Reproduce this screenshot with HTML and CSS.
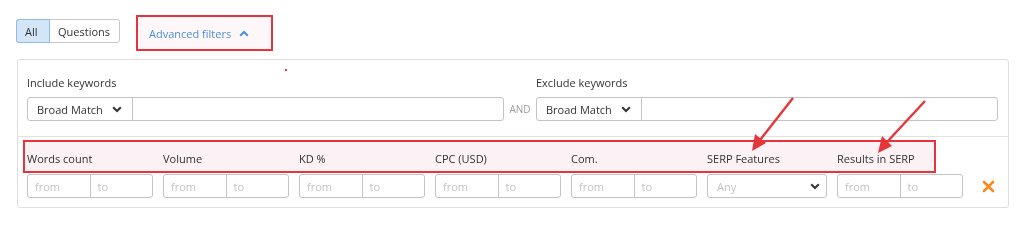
FILE: index.html
```html
<!DOCTYPE html>
<html>
<head>
<meta charset="utf-8">
<link rel="stylesheet" href="styles.css">
</head>
<body>
<div class="top">
  <div class="toggle">
    <span class="tg tg-on">All</span>
    <span class="tg">Questions</span>
  </div>
  <div class="adv">
    <span>Advanced filters</span>
    <svg class="chev-up" width="10" height="7" viewBox="0 0 10 7"><path d="M1.2 5.8 L5 2 L8.8 5.8" fill="none" stroke="#4a8fdc" stroke-width="2"/></svg>
  </div>
</div>
<div class="panel">
  <span class="dot"></span>
  <div class="sec sec1">
    <div class="kw">
      <div class="lbl">Include keywords</div>
      <div class="ig">
        <div class="match">Broad Match <svg width="10" height="7" viewBox="0 0 10 7"><path d="M1.2 1.2 L5 5 L8.8 1.2" fill="none" stroke="#333" stroke-width="2"/></svg></div>
        <div class="txt"></div>
      </div>
    </div>
    <div class="and">AND</div>
    <div class="kw">
      <div class="lbl">Exclude keywords</div>
      <div class="ig">
        <div class="match">Broad Match <svg width="10" height="7" viewBox="0 0 10 7"><path d="M1.2 1.2 L5 5 L8.8 1.2" fill="none" stroke="#333" stroke-width="2"/></svg></div>
        <div class="txt"></div>
      </div>
    </div>
  </div>
  <div class="sec sec2">
    <div class="hl"></div>
    <div class="grid">
      <div class="lbl">Words count</div>
      <div class="lbl">Volume</div>
      <div class="lbl">KD %</div>
      <div class="lbl">CPC (USD)</div>
      <div class="lbl">Com.</div>
      <div class="lbl">SERP Features</div>
      <div class="lbl">Results in SERP</div>
      <div class="rng"><span>from</span><span>to</span></div>
      <div class="rng"><span>from</span><span>to</span></div>
      <div class="rng"><span>from</span><span>to</span></div>
      <div class="rng"><span>from</span><span>to</span></div>
      <div class="rng"><span>from</span><span>to</span></div>
      <div class="sel"><span>Any</span><svg width="10" height="7" viewBox="0 0 10 7"><path d="M1.2 1.2 L5 5 L8.8 1.2" fill="none" stroke="#333" stroke-width="2"/></svg></div>
      <div class="rng"><span>from</span><span>to</span></div>
      <div class="close"><svg width="13" height="13" viewBox="0 0 13 13"><path d="M2 2 L11 11 M11 2 L2 11" stroke="#f58a1f" stroke-width="2.6" stroke-linecap="round"/></svg></div>
    </div>
  </div>
</div>
<svg class="arrows" width="1024" height="237" viewBox="0 0 1024 237">
  <line x1="793" y1="98" x2="760" y2="140" stroke="#e6343b" stroke-width="2.4"/>
  <polygon points="752,151 766,143 755,134" fill="#e6343b"/>
  <line x1="925" y1="101" x2="887" y2="142" stroke="#e6343b" stroke-width="2.4"/>
  <polygon points="878,153 892,146 882,136" fill="#e6343b"/>
</svg>
</body>
</html>
```

FILE: styles.css
```css
* { box-sizing: border-box; }
html, body { margin: 0; padding: 0; background: #fff; }
body {
  font-family: "Open Sans", "Noto Sans", sans-serif;
  font-size: 11px;
  color: #333;
  width: 1024px;
  height: 237px;
  position: relative;
  overflow: hidden;
}
.top {
  display: flex;
  align-items: flex-start;
  padding: 15px 0 0 16px;
  height: 59px;
}
.toggle {
  display: flex;
  margin-top: 4px;
  height: 24px;
  border: 1px solid #c9c9c9;
  border-radius: 3px;
}
.tg {
  display: flex;
  align-items: center;
  padding: 0 9px 0 8px;
  color: #333;
}
.tg-on {
  background: #d2e6f7;
  border: 1px solid #8fbde6;
  margin: -1px 0 -1px -1px;
  border-radius: 3px 0 0 3px;
  padding: 0 7px 0 8px;
  width: 34px;
}
.adv {
  margin-left: 16px;
  width: 137px;
  height: 36px;
  border: 2px solid #e6343b;
  background: #fdf7f9;
  display: flex;
  align-items: center;
  padding-left: 11px;
  color: #4a8fdc;
  font-size: 11px;
}
.chev-up { margin-left: 8px; }
.panel {
  position: relative;
  margin-left: 17px;
  width: 992px;
  height: 149px;
  border: 1px solid #dedede;
  border-radius: 3px;
}
.dot {
  position: absolute;
  left: 267px;
  top: 9px;
  width: 2px;
  height: 2px;
  background: #e6343b;
}
.sec { padding: 0 10px 0 9px; }
.sec1 {
  display: flex;
  align-items: flex-end;
  padding-top: 16px;
  padding-bottom: 15px;
  border-bottom: 1px solid #e3e3e3;
}
.kw { display: flex; flex-direction: column; }
.kw:first-child { width: 477px; }
.kw:last-child { flex: 1; }
.lbl {
  line-height: 14px;
  color: #333;
  white-space: nowrap;
}
.sec1 .lbl { margin-bottom: 7px; }
.ig {
  display: flex;
  height: 24px;
  border: 1px solid #c4c4c4;
  border-radius: 3px;
}
.match {
  width: 105px;
  display: flex;
  align-items: center;
  justify-content: space-between;
  padding: 0 10px 0 9px;
  border-right: 1px solid #c4c4c4;
  color: #333;
}
.txt { flex: 1; }
.and {
  width: 32px;
  height: 24px;
  display: flex;
  align-items: center;
  justify-content: center;
  color: #9a9a9a;
  font-size: 10px;
}
.sec2 {
  position: relative;
  padding-top: 15px;
}
.hl {
  position: absolute;
  left: 5px;
  top: 3px;
  width: 913px;
  height: 33px;
  border: 2px solid #e6343b;
  background: #fcf2f5;
  mix-blend-mode: multiply;
  pointer-events: none;
}
.grid {
  display: grid;
  grid-template-columns: repeat(5, 126px) 120px 126px 1fr;
  column-gap: 10px;
  row-gap: 8px;
}
.grid .lbl { grid-row: 1; }
.rng, .sel {
  grid-row: 2;
  height: 24px;
  border: 1px solid #c4c4c4;
  border-radius: 3px;
  display: flex;
  color: #c2c2c2;
}
.rng span {
  flex: 1;
  display: flex;
  align-items: center;
  padding-left: 7px;
}
.rng span + span { border-left: 1px solid #c4c4c4; }
.sel {
  align-items: center;
  justify-content: space-between;
  padding: 0 6px 0 9px;
}
.close {
  grid-row: 2;
  display: flex;
  align-items: center;
  padding-left: 9px;
}
.arrows {
  position: absolute;
  left: 0;
  top: 0;
  pointer-events: none;
}
```
